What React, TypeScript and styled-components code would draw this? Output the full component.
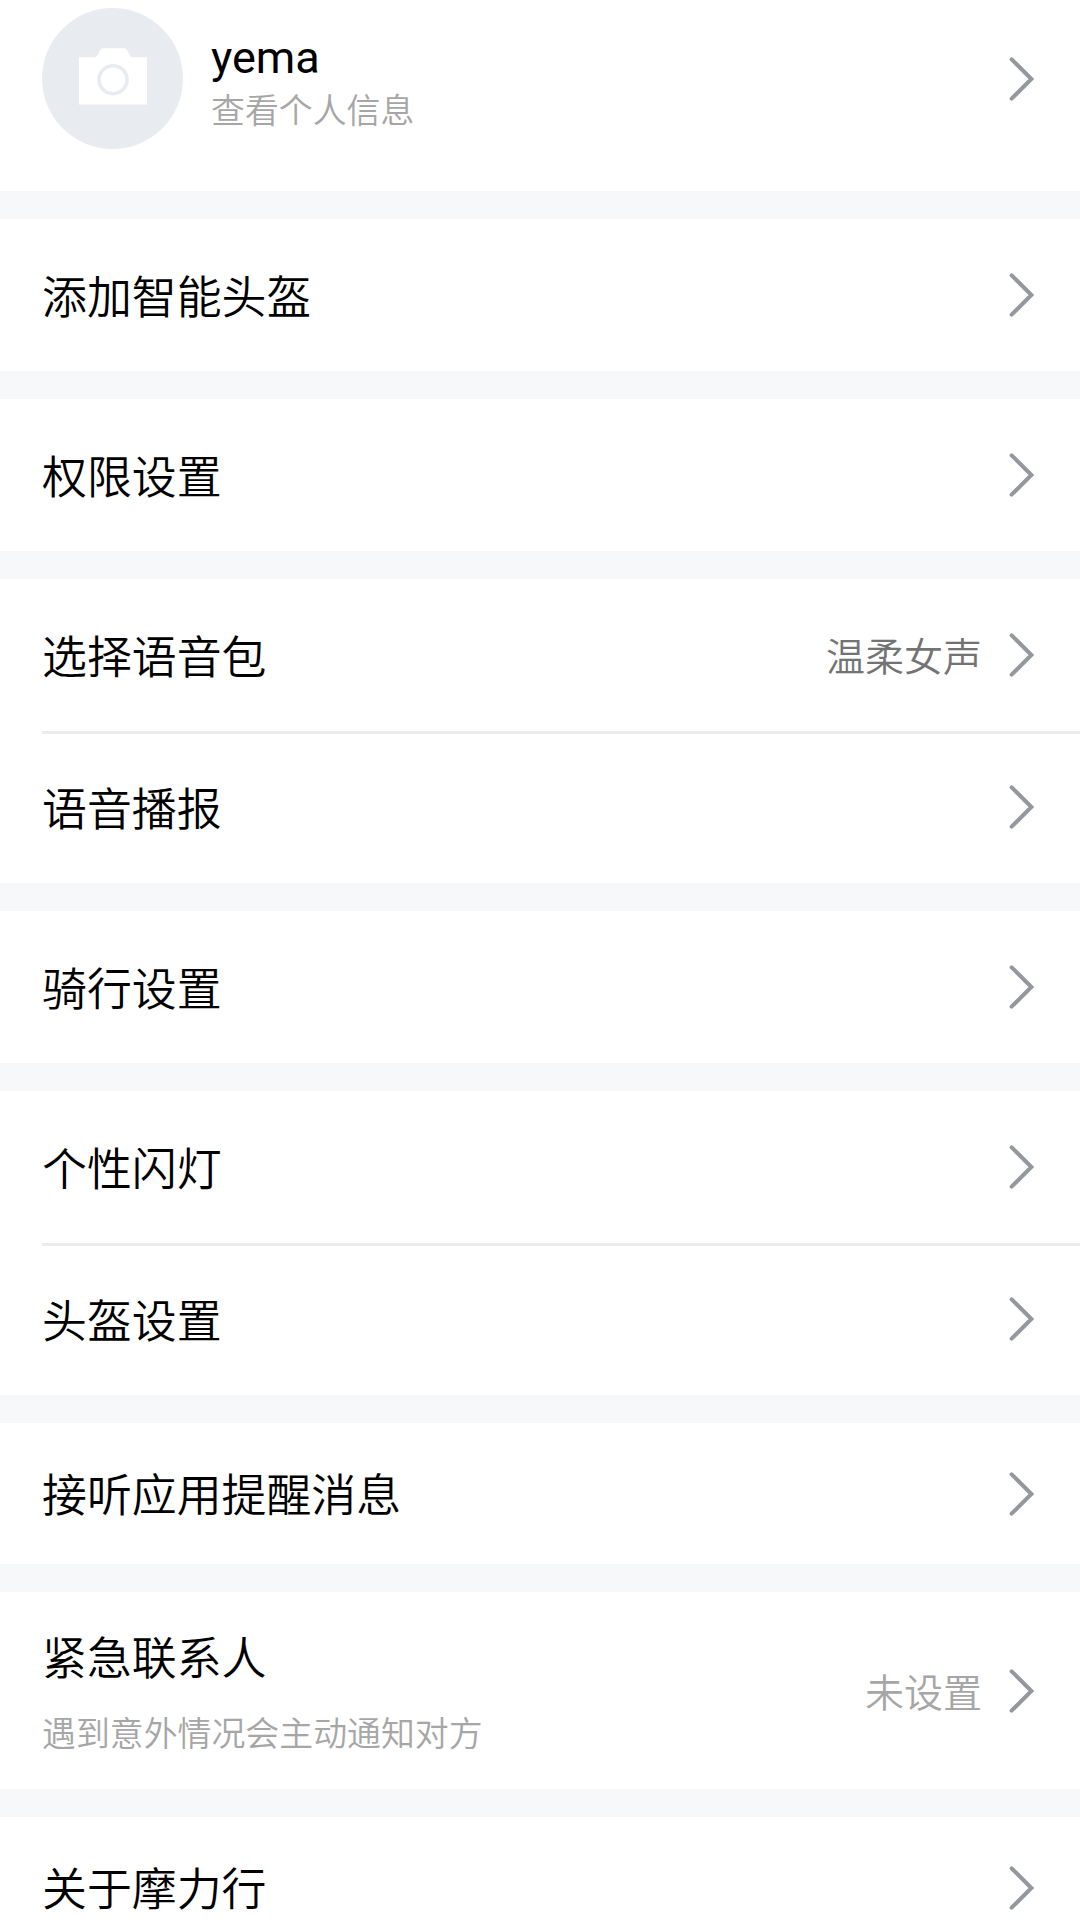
import React from "react";
import styled, { createGlobalStyle } from "styled-components";

const GlobalStyle = createGlobalStyle`
  * {
    box-sizing: border-box;
  }
  body {
    margin: 0;
    background: #f7f8fa;
    font-family: "Noto Sans CJK SC DemiLight", "Noto Sans CJK SC", sans-serif;
    font-weight: 300;
  }
`;

const Page = styled.main`
  display: flex;
  flex-direction: column;
  gap: 28px;
  width: 1080px;
  height: 1920px;
  overflow: hidden;
`;

const Section = styled.section`
  display: flex;
  flex-direction: column;
  flex-shrink: 0;
  background: #fff;
`;

const Row = styled.div<{ $height: number }>`
  display: flex;
  align-items: center;
  height: ${(p) => p.$height}px;
  padding: 0 42px;
`;

const ProfileRow = styled.div`
  display: flex;
  align-items: center;
  height: 191px;
  padding: 8px 42px 42px;
`;

const Divider = styled.hr`
  z-index: 1;
  height: 3px;
  margin: 0 0 -3px 42px;
  border: 0;
  background: #ebeded;
`;

const Avatar = styled.div`
  width: 141px;
  height: 141px;
  margin-right: 28px;
  border-radius: 50%;
  background: #e8ecf1;
`;

const Texts = styled.div<{ $top?: number; $bottom?: number }>`
  display: flex;
  flex: 1;
  flex-direction: column;
  padding-top: ${(p) => p.$top ?? 0}px;
  padding-bottom: ${(p) => p.$bottom ?? 0}px;
`;

const Name = styled.span`
  color: #000;
  font-family: Roboto, sans-serif;
  font-size: 45px;
  font-weight: 400;
  line-height: 53px;
`;

const Title = styled.span`
  color: #000;
  font-size: 44.9px;
  line-height: 66px;
`;

const Hint = styled.span<{ $gap: number }>`
  margin-top: ${(p) => p.$gap}px;
  color: #a6a6a6;
  font-size: 33.9px;
  line-height: 50px;
`;

const Value = styled.span<{ $color: string }>`
  margin-right: 26px;
  padding-bottom: 2px;
  color: ${(p) => p.$color};
  font-size: 39px;
  line-height: 58px;
`;

const ArrowIcon = styled.svg`
  display: block;
  width: 28px;
  height: 48px;
  margin-right: 2px;
`;

const Arrow = () => (
  <ArrowIcon viewBox="0 0 28 48" fill="none" stroke="#94979e" strokeWidth="4" strokeLinecap="round">
    <path d="M3.6 4.3 L23.4 24 L3.6 43.7" />
  </ArrowIcon>
);

const Camera = () => (
  <svg width="141" height="141" viewBox="0 0 141 141">
    <path
      d="M37 49.3 H52 Q55 49.3 56 46.5 L57.8 42.6 Q59 40.3 61.5 40.3 H82 Q84.500 40.3 85.500 42.6 L87.2 46.5 Q88.3 49.3 91 49.3 H105 V96.5 H37 Z"
      fill="#fff"
    />
    <circle cx="71" cy="71.7" r="14" fill="none" stroke="#e8ecf1" strokeWidth="3.6" />
  </svg>
);

type Item = {
  title: string;
  height?: number;
  hint?: string;
  value?: string;
  valueColor?: string;
};

const sections: Item[][] = [
  [{ title: "添加智能头盔" }],
  [{ title: "权限设置" }],
  [{ title: "选择语音包", value: "温柔女声", valueColor: "#737373" }, { title: "语音播报" }],
  [{ title: "骑行设置" }],
  [{ title: "个性闪灯" }, { title: "头盔设置" }],
  [{ title: "接听应用提醒消息", height: 141 }],
  [
    {
      title: "紧急联系人",
      height: 197,
      hint: "遇到意外情况会主动通知对方",
      value: "未设置",
      valueColor: "#a6a6a6",
    },
  ],
  [{ title: "关于摩力行", height: 141 }],
];

export default function App() {
  return (
    <>
      <GlobalStyle />
      <Page>
        <Section>
          <ProfileRow>
            <Avatar>
              <Camera />
            </Avatar>
            <Texts $top={7}>
              <Name>yema</Name>
              <Hint $gap={0}>查看个人信息</Hint>
            </Texts>
            <Arrow />
          </ProfileRow>
        </Section>
        {sections.map((items) => (
          <Section key={items[0].title}>
            {items.map((item, i) => (
              <React.Fragment key={item.title}>
                {i > 0 && <Divider />}
                <Row $height={item.height ?? 152}>
                  <Texts $bottom={1}>
                    <Title>{item.title}</Title>
                    {item.hint && <Hint $gap={18}>{item.hint}</Hint>}
                  </Texts>
                  {item.value && <Value $color={item.valueColor!}>{item.value}</Value>}
                  <Arrow />
                </Row>
              </React.Fragment>
            ))}
          </Section>
        ))}
      </Page>
    </>
  );
}
